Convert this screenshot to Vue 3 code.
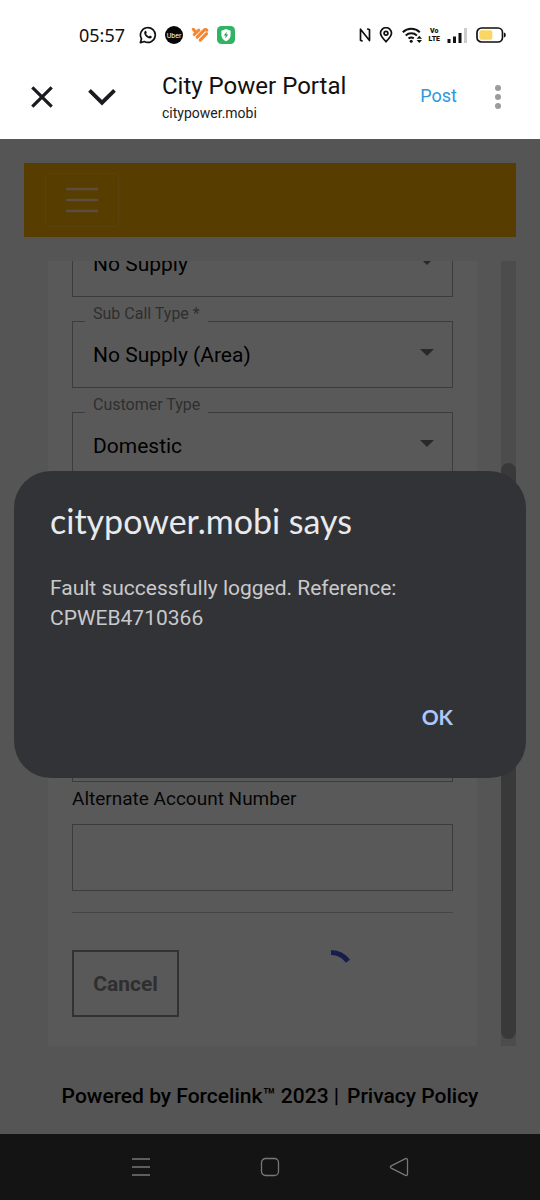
<script setup>
import { ref } from 'vue'

const callType = ref('No Supply')
const subCallType = ref('No Supply (Area)')
const customerType = ref('Domestic')
const account = ref('')
const alternate = ref('')
</script>

<template>
  <div class="screen">
    <header class="status">
      <time class="clock">05:57</time>
      <svg class="ic whatsapp" viewBox="0 0 18 18" width="18" height="18" fill="none" stroke="#111" stroke-width="1.7">
        <path d="M1.4 16.6 2.5 12.8A7.4 7.4 0 1 1 5.3 15.5Z" stroke-linejoin="round" />
        <path d="M5.8 5.3c.7-.8 1.3-.4 1.6.5l.4 1-.7 1c.7 1.3 1.6 2.1 2.9 2.7l.9-.9 1.9.9c.2 1.3-.8 1.9-1.9 1.9-2.8-.2-5.800-3.300-5.700-5.700 0-.6.2-1 .6-1.400z" fill="#111" stroke="none" />
      </svg>
      <svg class="ic" viewBox="0 0 18 18" width="18" height="18">
        <circle cx="9" cy="9" r="9" fill="#060606" />
        <text x="9" y="11.500" text-anchor="middle" font-size="7" font-family="Roboto, sans-serif" fill="#fff">Uber</text>
      </svg>
      <svg class="ic" viewBox="0 0 18 18" width="18" height="18" fill="none" stroke="#f58634" stroke-width="3.100" stroke-linecap="round" stroke-linejoin="round">
        <path d="M2.300 3.300 4.200 5.600M3.300 8.500 7.800 4.200" />
        <path d="M6.200 11.200 12.400 4.800Q14.500 2.800 15.800 4.200" />
        <path d="M9.200 14.200 15.600 7.600" />
      </svg>
      <svg class="ic" viewBox="0 0 18 18" width="18" height="18">
        <rect width="18" height="18" rx="4.500" fill="#2fb463" />
        <path d="M9 2.900 13.600 4.700V9c0 3-1.800 5-4.600 6.200C6.200 14 4.400 12 4.400 9V4.700Z" fill="#fff" />
        <path d="M9.800 5.700 6.800 9.600h2l-.6 3 3-4h-2z" fill="#239a53" />
      </svg>
      <span class="grow"></span>
      <svg viewBox="0 0 12 16" width="12" height="16" fill="none" stroke="#111" stroke-width="1.700">
        <path d="M3.600 14.300 1.500 13.200V2.200L10.500 13.500V2.800L8.200 1.700" stroke-linejoin="round" />
      </svg>
      <svg class="pin" viewBox="0 0 14 16" width="14" height="16" fill="none" stroke="#111" stroke-width="1.700">
        <path d="M7 14.700C3.700 11.200 1.500 8.800 1.500 6.200a5.500 5.500 0 0 1 11 0C12.500 8.800 10.300 11.200 7 14.700Z" />
        <circle cx="7" cy="6.200" r="1.900" />
      </svg>
      <svg class="wifi" viewBox="0 0 20 16" width="20" height="16" fill="none" stroke="#111" stroke-width="2">
        <path d="M.8 5.200a12.500 12.500 0 0 1 17 0M3.700 8.500a8.300 8.300 0 0 1 11.200 0M6.500 11.600a4.300 4.300 0 0 1 5.300-.2" />
        <circle cx="9.200" cy="14.200" r="1.500" fill="#111" stroke="none" />
        <path d="M17.300 8.800 20 11.700h-5.400zM17.300 16 20 13h-5.400z" fill="#111" stroke="none" />
      </svg>
      <span class="volte"><span>Vo</span><span>LTE</span></span>
      <svg class="signal" viewBox="0 0 20 16" width="20" height="16">
        <path d="M.5 12h3v4h-3zM6 9.500h3V16H6zM11.500 6h3v10h-3z" fill="#111" />
        <path d="M17 1h3v15h-3z" fill="#ccc" />
      </svg>
      <svg class="battery" viewBox="0 0 30 16" width="30" height="16">
        <rect x="1" y="1" width="25.500" height="14" rx="4.500" fill="#fff" stroke="#111" stroke-width="1.700" />
        <rect x="3.300" y="3.300" width="13" height="9.400" rx="2" fill="#fbd663" />
        <path d="M28 5.500q1.800.4 1.800 2.500T28 10.500z" fill="#111" />
      </svg>
    </header>

    <header class="appbar">
      <button class="icon-btn" aria-label="Close">
        <svg viewBox="0 0 24 24" width="24" height="24" stroke="#191b1f" stroke-width="3.200"><path d="M2.300 2.300 21.700 21.700M21.700 2.300 2.300 21.700" /></svg>
      </button>
      <button class="icon-btn down" aria-label="Minimize">
        <svg viewBox="0 0 28 18" width="28" height="18" fill="none" stroke="#191b1f" stroke-width="3.800"><path d="M1.500 2.300 14 14.700 26.500 2.300" /></svg>
      </button>
      <div class="heading">
        <h1>City Power Portal</h1>
        <p>citypower.mobi</p>
      </div>
      <button class="post">Post</button>
      <button class="icon-btn more" aria-label="More options">
        <svg viewBox="0 0 6 24" width="6" height="24" fill="#9b9b9b"><circle cx="3" cy="3" r="3" /><circle cx="3" cy="12" r="3" /><circle cx="3" cy="21" r="3" /></svg>
      </button>
    </header>

    <main class="page">
      <nav class="navbar">
        <button class="toggler" aria-label="Menu">
          <svg viewBox="0 0 32 26" width="32" height="26" stroke="#ffe2ac" stroke-width="2.500"><path d="M0 2H32M0 13H32M0 24H32" /></svg>
        </button>
      </nav>

      <div class="viewport">
        <form class="card" @submit.prevent>
          <div class="group selects">
            <div class="field">
              <select v-model="callType" aria-label="Call Type"><option>No Supply</option></select>
              <svg class="caret" viewBox="0 0 14 7" width="14" height="7"><path d="M0 0H14L7 7Z" /></svg>
            </div>
            <div class="field">
              <label for="sub">Sub Call Type *</label>
              <select id="sub" v-model="subCallType"><option>No Supply (Area)</option></select>
              <svg class="caret" viewBox="0 0 14 7" width="14" height="7"><path d="M0 0H14L7 7Z" /></svg>
            </div>
            <div class="field">
              <label for="cust">Customer Type</label>
              <select id="cust" v-model="customerType"><option>Domestic</option></select>
              <svg class="caret" viewBox="0 0 14 7" width="14" height="7"><path d="M0 0H14L7 7Z" /></svg>
            </div>
          </div>
          <div class="group">
            <input v-model="account" class="box" type="text" aria-label="Account Number" />
            <label class="caption" for="alt">Alternate Account Number</label>
            <input id="alt" v-model="alternate" class="box" type="text" />
            <hr />
            <div class="actions">
              <button class="cancel" type="button">Cancel</button>
              <div class="loading">
                <svg viewBox="0 0 48 48" width="48" height="48" fill="none" stroke="#4258d8" stroke-width="5"><path d="M24 2.500A21.500 21.500 0 0 1 41 11.300" /></svg>
              </div>
            </div>
          </div>
        </form>
        <div class="track"><div class="thumb"></div></div>
      </div>

      <footer class="footer">
        <span>Powered by Forcelink™ 2023 |</span>
        <a href="#privacy">Privacy Policy</a>
      </footer>

      <div class="scrim">
        <section class="dialog" role="alertdialog" aria-labelledby="dlg-title" aria-describedby="dlg-text">
          <h2 id="dlg-title">citypower.mobi says</h2>
          <p id="dlg-text">Fault successfully logged. Reference: CPWEB4710366</p>
          <button class="ok">OK</button>
        </section>
      </div>
    </main>

    <nav class="sysnav">
      <button aria-label="Recent apps">
        <svg viewBox="0 0 20 20" width="20" height="20" stroke="#777" stroke-width="1.500"><path d="M1 2H19M1 10H19M1 18H19" /></svg>
      </button>
      <button aria-label="Home">
        <svg viewBox="0 0 20 20" width="20" height="20" fill="none" stroke="#777" stroke-width="1.300"><rect x="1.500" y="1.500" width="17" height="17" rx="4" /></svg>
      </button>
      <button aria-label="Back">
        <svg viewBox="0 0 20 20" width="20" height="20" fill="none" stroke="#777" stroke-width="1.300"><path d="M2.200 8.900 16.500 1.700Q18.500 1 18.500 3V17Q18.500 19 16.500 18.300L2.200 11.100Q.5 10 2.200 8.900Z" /></svg>
      </button>
    </nav>
  </div>
</template>

<style>
body {
  margin: 0;
}
</style>

<style scoped>
.screen {
  display: flex;
  flex-direction: column;
  min-height: 100vh;
  background: #fff;
  color: #111;
  font-family: Roboto, "Liberation Sans", sans-serif;
}
.screen * {
  box-sizing: border-box;
}
button {
  font: inherit;
  border: 0;
  padding: 0;
  background: none;
}
svg {
  display: block;
}
.status {
  display: flex;
  align-items: center;
  height: 69px;
  padding: 0 34px 0 79px;
}
.clock {
  font-family: "Noto Sans", sans-serif;
  font-size: 18px;
  margin-right: 4px;
}
.ic {
  margin-left: 8px;
}
.whatsapp {
  margin-left: 10px;
}
.grow {
  flex: 1;
}
.pin {
  margin-left: 8px;
}
.wifi {
  margin-left: 9px;
}
.volte {
  display: flex;
  flex-direction: column;
  align-items: center;
  margin-left: 7px;
  font-size: 7px;
  line-height: 8px;
  font-weight: 900;
}
.signal {
  margin-left: 7px;
}
.battery {
  margin-left: 9px;
}
.appbar {
  display: flex;
  align-items: center;
  height: 70px;
  padding: 0 39px 14px 30px;
}
.down {
  margin-left: 34px;
}
.heading {
  flex: 1;
  margin-left: 46px;
}
.heading h1 {
  margin: 0;
  font-size: 24px;
  line-height: 32px;
  font-weight: 400;
}
.heading p {
  margin: 0;
  font-size: 14px;
  line-height: 22px;
  color: #222;
}
.post {
  padding-bottom: 3px;
  font-size: 18px;
  line-height: 24px;
  color: #2d97dc;
}
.more {
  margin-left: 38px;
}
.page {
  position: relative;
  flex: 1;
  display: flex;
  flex-direction: column;
  padding: 24px 24px 0;
  background: #f3f3f3;
}
.navbar {
  display: flex;
  align-items: center;
  height: 74px;
  padding: 0 21px;
  background: #f8ae00;
}
.toggler {
  display: grid;
  place-items: center;
  width: 74px;
  height: 54px;
  border: 1px solid #ffbe2e;
  border-radius: 4px;
}
.viewport {
  flex: 1;
  display: flex;
  min-height: 785px;
  margin-top: 24px;
  overflow: hidden;
}
.card {
  flex: 1;
  display: flex;
  flex-direction: column;
  justify-content: space-between;
  margin: 0 24px;
  padding: 0 24px 29px;
  background: #fff;
}
.group {
  display: flex;
  flex-direction: column;
}
.selects {
  gap: 24px;
  margin-top: -31px;
}
.field {
  position: relative;
}
.field label {
  position: absolute;
  top: -17px;
  left: 13px;
  padding: 0 8px;
  font-size: 16px;
  line-height: 20px;
  color: #888;
  background: #fff;
}
.field select,
.box {
  display: block;
  width: 100%;
  height: 67px;
  padding: 0 20px;
  border: 1px solid #acacac;
  border-radius: 0;
  background: none;
  appearance: none;
  font: inherit;
  font-size: 21px;
  color: #000;
  opacity: 1;
}
.caret {
  position: absolute;
  top: 28px;
  right: 19px;
  fill: #757575;
}
.caption {
  font-size: 19px;
  line-height: 32px;
  padding-top: 1px;
  margin-bottom: 9px;
  color: #111;
}
hr {
  width: 100%;
  height: 1px;
  margin: 21px 0 37px;
  border: 0;
  background: #c6c6c6;
}
.actions {
  display: grid;
  grid-template-columns: 107px 1fr;
}
.cancel {
  height: 67px;
  border: 2px solid #909090;
  font-size: 21px;
  font-weight: 700;
  color: #868686;
}
.loading {
  display: flex;
  justify-content: center;
  padding-left: 30px;
}
.track {
  display: flex;
  flex-direction: column;
  justify-content: flex-end;
  width: 15px;
  padding-bottom: 7px;
  background: #d9d9d9;
}
.thumb {
  height: 74%;
  border-radius: 8px;
  background: #a3a3a3;
}
.footer {
  display: flex;
  justify-content: center;
  align-items: center;
  gap: 8px;
  height: 88px;
  padding-top: 12px;
  font-size: 21px;
  font-weight: 500;
  color: #000;
}
.footer a {
  color: inherit;
  text-decoration: none;
}
.scrim {
  position: absolute;
  inset: 0;
  display: flex;
  align-items: center;
  padding: 0 14px 24px;
  background: rgba(0, 0, 0, 0.65);
}
.dialog {
  display: flex;
  flex-direction: column;
  width: 100%;
  min-height: 307px;
  padding: 28px 36px 41px;
  border-radius: 37px;
  background: #323336;
}
.dialog h2 {
  margin: 0;
  font-family: Lato, sans-serif;
  font-size: 34px;
  line-height: 44px;
  font-weight: 400;
  color: #e8eaed;
}
.dialog p {
  margin: 30px 0 0;
  font-size: 21px;
  line-height: 30px;
  color: #c8c9cb;
}
.ok {
  align-self: flex-end;
  margin: auto 37px 0 0;
  font-family: Lato, sans-serif;
  font-size: 21px;
  line-height: 40px;
  font-weight: 700;
  color: #adc7f9;
}
.sysnav {
  display: flex;
  justify-content: center;
  align-items: center;
  gap: 109px;
  height: 66px;
  background: #141414;
}
</style>
